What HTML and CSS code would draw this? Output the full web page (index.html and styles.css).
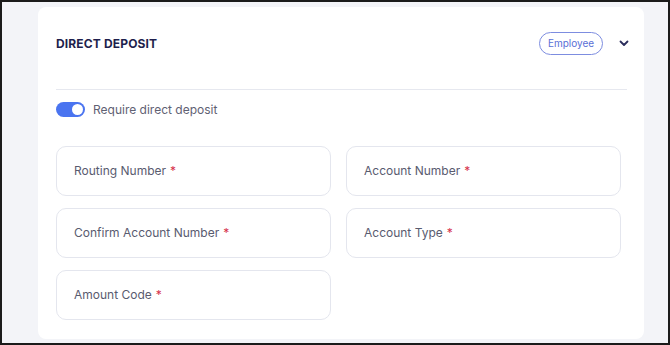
FILE: index.html
```html
<!DOCTYPE html>
<html>
    <head>
        <link rel="stylesheet" href="styles.css">
    </head>
    <body>
        <div class="frame">
            <div class="card">
                <div class="header">
                    <h2 class="title">DIRECT DEPOSIT</h2>
                    <span class="pill">Employee</span>
                    <svg class="chevron" width="10" height="7" viewBox="0 0 10 7">
                        <path d="M1.5 1.5 L5 5 L8.5 1.5" fill="none" stroke="#2b2d5c" stroke-width="1.8" stroke-linecap="round" stroke-linejoin="round"/>
                    </svg>
                </div>
                <div class="divider"></div>
                <label class="switch-row">
                    <span class="switch"><span class="knob"></span></span>
                    <span class="switch-text">Require direct deposit</span>
                </label>
                <div class="fields">
                    <div class="field">Routing Number <span class="req">*</span></div>
                    <div class="field">Account Number <span class="req">*</span></div>
                    <div class="field">Confirm Account Number <span class="req">*</span></div>
                    <div class="field">Account Type <span class="req">*</span></div>
                    <div class="field">Amount Code <span class="req">*</span></div>
                </div>
            </div>
        </div>
    </body>
</html>
```

FILE: styles.css
```css
*{
    box-sizing:border-box;
}
body{
    margin:0;
    font-family:Inter, "Noto Sans", sans-serif;
}
.frame{
    height:345px;
    border:2px solid #1b1b1b;
    background-color:#f3f4f8;
    padding:5px 24px 0 36px;
}
.card{
    background-color:#fff;
    border-radius:8px;
    height:332px;
    padding:0 17px 0 18px;
}
.header{
    display:flex;
    align-items:center;
    padding-top:25px;
    height:47px;
}
.title{
    margin:0;
    flex:1;
    font-size:12px;
    font-weight:700;
    color:#1f1f4d;
    letter-spacing:0.15px;
}
.pill{
    height:23px;
    width:64px;
    border:1px solid #7d8de0;
    border-radius:12px;
    color:#5a6fd6;
    font-size:10px;
    display:flex;
    align-items:center;
    justify-content:center;
}
.chevron{
    margin-left:16px;
    margin-right:-2px;
}
.divider{
    height:1px;
    background-color:#e6e8ef;
    margin-top:35px;
}
.switch-row{
    display:flex;
    align-items:center;
    margin-top:11px;
    height:16px;
}
.switch{
    width:29px;
    height:15px;
    border-radius:8px;
    background-color:#4a74f0;
    display:flex;
    align-items:center;
    justify-content:flex-end;
    padding-right:2px;
}
.knob{
    width:11px;
    height:11px;
    border-radius:50%;
    background-color:#fff;
}
.switch-text{
    margin-left:8px;
    font-size:12px;
    color:#5f6173;
}
.fields{
    display:grid;
    grid-template-columns:275px 275px;
    column-gap:15px;
    row-gap:12px;
    margin-top:29px;
}
.field{
    height:50px;
    border:1px solid #e4e6ee;
    border-radius:10px;
    padding-left:17px;
    padding-bottom:1px;
    display:flex;
    align-items:center;
    font-size:12px;
    color:#595b6f;
}
.req{
    color:#d6304a;
    margin-left:4px;
}
```
